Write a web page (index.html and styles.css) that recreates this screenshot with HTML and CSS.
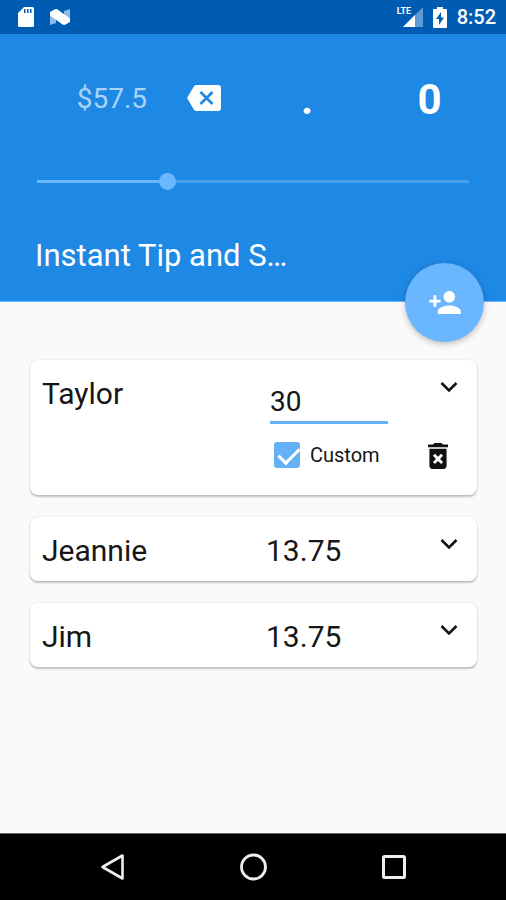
FILE: index.html
```html
<!DOCTYPE html>
<html lang="en">
<head>
<meta charset="utf-8">
<meta name="viewport" content="width=device-width, initial-scale=1">
<title>Instant Tip and S…</title>
<link rel="stylesheet" href="styles.css">
</head>
<body>
<div class="status">
  <svg class="status-sd" viewBox="0 0 16 20" aria-hidden="true"><path fill="#fff" fill-rule="evenodd" d="M6 0h8.500a1.500 1.500 0 0 1 1.500 1.500v17a1.500 1.500 0 0 1-1.500 1.500h-13A1.500 1.500 0 0 1 0 18.500V6zM6 2v4h1.500V2zm3 0v4h1.500V2zm3 0v4h1.500V2z"/></svg>
  <svg class="status-n" viewBox="0 0 20 16" aria-hidden="true"><path fill="#8fbbe6" d="M0 3h6v11l-6 2zM14 2l6-2v13h-6z"/><path fill="#fff" d="M0 3L5 .3Q6.500-.4 8 .7L20 9.500V13l-5 2.700q-1.200.6-2.400-.2L0 6.500z"/></svg>
  <div class="status-right">
    <span class="signal">
      <svg class="signal-icon" viewBox="0 0 20 20" aria-hidden="true"><path fill="#5f9ad4" d="M20 0v20H0z"/><path fill="#fff" d="M12 8v12H0z"/></svg>
      <span class="lte">LTE</span>
    </span>
    <svg class="battery" viewBox="0 0 14 21" aria-hidden="true"><path fill="#fff" fill-rule="evenodd" d="M4 0h6v2h3a1 1 0 0 1 1 1v17a1 1 0 0 1-1 1H1a1 1 0 0 1-1-1V3a1 1 0 0 1 1-1h3zM8 5l-5 7h3v6l5-7.500H8z"/></svg>
    <span class="clock">8:52</span>
  </div>
</div>

<header class="hero">
  <div class="amount-row">
    <output class="amount">$57.5</output>
    <button class="plain" type="button" aria-label="Delete digit">
      <svg class="backspace" viewBox="0 0 34 26" aria-hidden="true"><path fill="#fff" d="M9.500 0H31a3 3 0 0 1 3 3v20a3 3 0 0 1-3 3H9.500a3 3 0 0 1-2.500-1.300L0 13 7 1.300A3 3 0 0 1 9.500 0z"/><path fill="none" stroke="#1e88e5" stroke-width="2.600" d="M13.500 7l12 12m0-12l-12 12"/></svg>
    </button>
    <button class="plain key" type="button">.</button>
    <button class="plain key" type="button">0</button>
  </div>
  <input class="slider" type="range" min="0" max="100" step="0.1" value="29.3" aria-label="Tip percentage">
  <h1 class="title">Instant Tip and S…</h1>
  <button class="fab" type="button" aria-label="Add person">
    <svg class="fab-icon" viewBox="1 4 22 16" aria-hidden="true"><path fill="#fff" d="M15 12c2.210 0 4-1.790 4-4s-1.790-4-4-4-4 1.790-4 4 1.790 4 4 4zm-9-2V7H4v3H1v2h3v3h2v-3h3v-2H6zm9 4c-2.670 0-8 1.340-8 4v2h16v-2c0-2.660-5.330-4-8-4z"/></svg>
  </button>
</header>

<main class="people">
  <section class="card card-open">
    <h2 class="name">Taylor</h2>
    <div class="custom">
      <input class="share" type="text" value="30" aria-label="Taylor's share">
      <label class="check">
        <input class="box" type="checkbox" checked>
        <span>Custom</span>
      </label>
    </div>
    <div class="actions">
      <button class="plain" type="button" aria-label="Collapse Taylor"><svg class="chevron" viewBox="0 0 18 12" aria-hidden="true"><path fill="none" stroke="#111" stroke-width="2.600" d="M1.500 2L9 9.500 16.500 2"/></svg></button>
      <button class="plain trash-button" type="button" aria-label="Remove Taylor"><svg class="trash" viewBox="5 3 14 18" preserveAspectRatio="none" aria-hidden="true"><path fill="#111" fill-rule="evenodd" d="M6 19c0 1.100.9 2 2 2h8c1.100 0 2-.9 2-2V7H6v12zm2.460-7.120l1.410-1.410L12 12.590l2.120-2.120 1.410 1.410L13.410 14l2.120 2.120-1.410 1.410L12 15.410l-2.120 2.120-1.410-1.410L10.590 14l-2.130-2.120zM15.500 4l-1-1h-5l-1 1H5v2h14V4z"/></svg></button>
    </div>
  </section>
  <section class="card">
    <h2 class="name">Jeannie</h2>
    <output class="value">13.75</output>
    <div class="actions"><button class="plain" type="button" aria-label="Expand Jeannie"><svg class="chevron" viewBox="0 0 18 12" aria-hidden="true"><path fill="none" stroke="#111" stroke-width="2.600" d="M1.500 2L9 9.500 16.500 2"/></svg></button></div>
  </section>
  <section class="card">
    <h2 class="name">Jim</h2>
    <output class="value">13.75</output>
    <div class="actions"><button class="plain" type="button" aria-label="Expand Jim"><svg class="chevron" viewBox="0 0 18 12" aria-hidden="true"><path fill="none" stroke="#111" stroke-width="2.600" d="M1.500 2L9 9.500 16.500 2"/></svg></button></div>
  </section>
</main>

<nav class="navbar" aria-label="System">
  <button class="plain" type="button" aria-label="Back"><svg class="nav-icon" viewBox="0 0 28 28" aria-hidden="true"><path fill="none" stroke="#eee" stroke-width="2.600" stroke-linejoin="round" d="M24.500 2.500v23L4.500 14z"/></svg></button>
  <button class="plain" type="button" aria-label="Home"><svg class="nav-icon" viewBox="0 0 28 28" aria-hidden="true"><circle cx="14.500" cy="14" r="12" fill="none" stroke="#eee" stroke-width="2.800"/></svg></button>
  <button class="plain" type="button" aria-label="Recent apps"><svg class="nav-icon" viewBox="0 0 28 28" aria-hidden="true"><rect x="3.500" y="3.500" width="21" height="21" rx="1" fill="none" stroke="#eee" stroke-width="3"/></svg></button>
</nav>
</body>
</html>
```
FILE: styles.css
```css
* { box-sizing: border-box; }

body {
  display: flex;
  flex-direction: column;
  min-height: 100vh;
  margin: 0;
  background: #fafafa;
  color: #161616;
  font-family: Roboto, sans-serif;
}

h1, h2 { margin: 0; font-weight: 400; }

svg { display: block; }

.plain {
  padding: 0;
  border: 0;
  background: none;
  color: inherit;
  font-family: inherit;
}

.status {
  display: flex;
  align-items: center;
  height: 34px;
  padding: 0 10px 0 18px;
  background: #005cb2;
  color: #fff;
}
.status-sd { width: 16px; height: 20px; }
.status-n { width: 20px; height: 16px; margin-left: 16px; }
.status-right {
  display: flex;
  align-items: center;
  gap: 10px;
  margin-left: auto;
}
.signal { position: relative; padding-left: 6px; }
.signal-icon { width: 20px; height: 20px; }
.lte {
  position: absolute;
  top: 0;
  left: 0;
  background: #005cb2;
  font-size: 9px;
  font-weight: 700;
  line-height: 9px;
}
.battery { width: 14px; height: 21px; }
.clock { font-size: 20px; font-weight: 500; line-height: 24px; }

.hero {
  position: relative;
  padding: 38px 35px 26px;
  border-bottom: 1px solid #6ab7ff;
  background: #1e88e5;
  color: #fff;
}
.amount-row {
  display: grid;
  grid-template-columns: 112px 114px 92px 1fr;
  align-items: center;
  height: 52px;
  margin-right: -35px;
}
.amount { color: #a9d4fa; font-size: 28px; text-align: right; }
.backspace { width: 34px; height: 26px; margin: 0 auto; }
.key { padding-top: 4px; font-size: 42px; font-weight: 700; line-height: 48px; }

.slider {
  display: block;
  width: calc(100% - 4px);
  height: 16px;
  margin: 49px 2px 0;
  appearance: none;
  background: linear-gradient(90deg, #6ab7ff 30%, #4a9feb 30%) center / 100% 3px no-repeat;
}
.slider::-webkit-slider-thumb {
  width: 17px;
  height: 17px;
  appearance: none;
  border-radius: 50%;
  background: #6ab7ff;
}

.title {
  width: 260px;
  margin-top: 48px;
  overflow: hidden;
  font-size: 31px;
  line-height: 38px;
  white-space: nowrap;
}

.fab {
  position: absolute;
  right: 22px;
  bottom: -41px;
  display: grid;
  place-items: center;
  width: 79px;
  height: 79px;
  padding: 0;
  border: 0;
  border-radius: 50%;
  background: #6ab7ff;
  box-shadow: 0 2px 6px rgba(0, 0, 0, 0.25);
}
.fab-icon { width: 32px; height: 23px; }

.people {
  display: grid;
  flex: 1;
  align-content: start;
  gap: 22px;
  padding: 58px 29px 22px 30px;
}
.card {
  display: grid;
  grid-template-columns: 224px 1fr 44px;
  align-items: start;
  min-height: 64px;
  padding: 15px 6px 11px 12px;
  border-radius: 8px;
  background: #fff;
  box-shadow: 0 2px 2px rgba(0, 0, 0, 0.22), 0 0 2px rgba(0, 0, 0, 0.12);
}
.name, .value { font-size: 30px; line-height: 38px; }

.card-open { min-height: 135px; }
.custom { padding-left: 4px; }
.share {
  display: block;
  width: 118px;
  height: 49px;
  padding: 6px 0 0;
  border: 0;
  border-bottom: 3px solid #64b1f8;
  outline: 0;
  background: none;
  color: inherit;
  font-family: inherit;
  font-size: 28px;
}
.check {
  display: flex;
  align-items: center;
  gap: 10px;
  margin-top: 18px;
  padding-left: 4px;
  font-size: 20px;
  line-height: 26px;
}
.box {
  width: 26px;
  height: 26px;
  margin: 0;
  appearance: none;
  border-radius: 3px;
  background: #64b1f8;
}
.box:checked::before {
  content: "";
  display: block;
  width: 9px;
  height: 18px;
  margin: 1px 0 0 9px;
  border: solid #fff;
  border-width: 0 3px 3px 0;
  transform: rotate(45deg);
}
.actions {
  display: grid;
  justify-items: center;
  gap: 50px;
  padding-top: 6px;
}
.chevron { width: 18px; height: 12px; }
.trash-button { margin-right: 22px; }
.trash { width: 20px; height: 26px; }

.navbar {
  display: flex;
  align-items: center;
  justify-content: center;
  gap: 113px;
  height: 67px;
  border-top: 1px solid #666;
  background: #000;
}
.nav-icon { width: 28px; height: 28px; }
```
